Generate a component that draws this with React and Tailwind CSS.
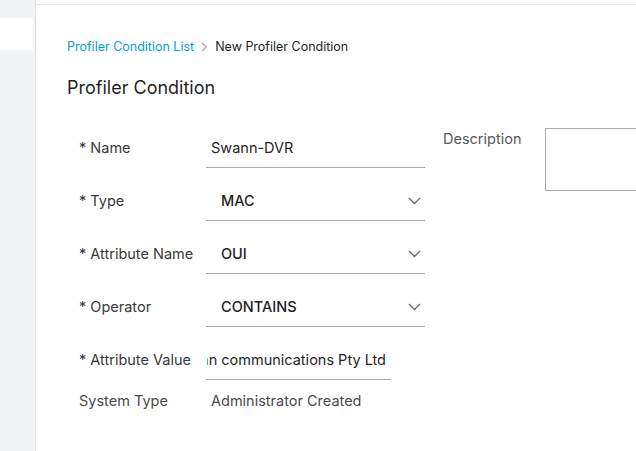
const font = { fontFamily: 'Inter, "Liberation Sans", Arial, sans-serif' };

function Chevron() {
  return (
    <svg width="13" height="8" viewBox="0 0 13 8" fill="none" className="shrink-0">
      <polyline points="1,1 6.5,6.5 12,1" stroke="#6b6b6e" strokeWidth="1.3" />
    </svg>
  );
}

function Row({ label, children }) {
  return (
    <div className="flex items-center h-[40px]">
      <div className="w-[127px] text-[14.5px] text-[#39393b]">{label}</div>
      {children}
    </div>
  );
}

function SelectField({ value }) {
  return (
    <div className="flex items-center justify-between w-[219px] h-[40px] border-b border-[#a9a9ab] pl-[15px] pr-[4px]">
      <span className="text-[14.5px] font-medium text-[#1f1f1f]">{value}</span>
      <Chevron />
    </div>
  );
}

export default function App() {
  return (
    <div className="flex w-[636px] h-[451px] overflow-hidden bg-white" style={font}>
      <aside className="w-[36px] shrink-0 bg-[#f2f3f5] border-r border-[#dcdde0]">
        <div className="mt-[18px] h-[32px] w-[33px] bg-white" />
      </aside>

      <main className="flex-1 mt-[4px] border-t border-[#e3e4e6] pl-[31px]">
        <nav className="flex items-center mt-[34px] text-[12.5px] h-[16px]">
          <span className="text-[#049fd9]">Profiler Condition List</span>
          <svg width="7" height="10" viewBox="0 0 7 10" className="mx-[7px]">
            <polyline points="1,1 5.5,5 1,9" fill="none" stroke="#a5a6a8" strokeWidth="1.1" />
          </svg>
          <span className="text-[#1f1f1f]">New Profiler Condition</span>
        </nav>

        <h1 className="mt-[21px] text-[18px] leading-[24px] text-[#1f1f1f]">Profiler Condition</h1>

        <div className="flex mt-[28px]">
          <div className="pl-[12px] flex flex-col gap-[13px]">
            <Row label="* Name">
              <div className="flex items-center w-[219px] h-[40px] border-b border-[#a9a9ab] pl-[5px]">
                <span className="text-[14.5px] text-[#1f1f1f]">Swann-DVR</span>
              </div>
            </Row>
            <Row label="* Type">
              <SelectField value="MAC" />
            </Row>
            <Row label="* Attribute Name">
              <SelectField value="OUI" />
            </Row>
            <Row label="* Operator">
              <SelectField value="CONTAINS" />
            </Row>
            <Row label="* Attribute Value">
              <input
                readOnly
                dir="rtl"
                value="Swann communications Pty Ltd"
                className="w-[185px] h-[40px] border-b border-[#a9a9ab] pr-[5px] pl-[1px] text-[14.5px] text-[#1f1f1f] outline-none bg-transparent"
              />
            </Row>
            <div className="flex items-center -mt-[2px] h-[20px]">
              <div className="w-[132px] text-[14.5px] text-[#4a4a4c]">System Type</div>
              <span className="text-[14.5px] text-[#4a4a4c]">Administrator Created</span>
            </div>
          </div>

          <div className="flex items-start ml-[18px]">
            <div className="w-[102px] text-[14.5px] text-[#58585b]">Description</div>
            <div className="w-[120px] h-[63px] border border-[#a9a9ab] bg-white" />
          </div>
        </div>
      </main>
    </div>
  );
}
